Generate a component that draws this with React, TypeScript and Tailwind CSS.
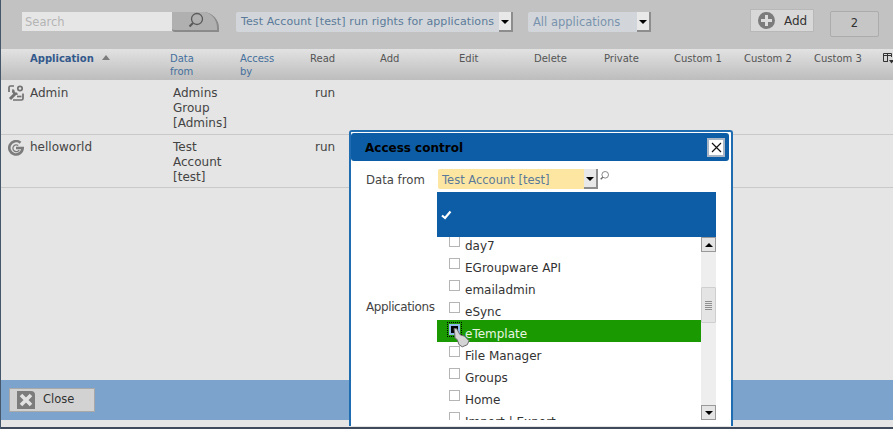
import React from 'react';

const font = { fontFamily: '"DejaVu Sans", sans-serif' };

const columns = ['Read', 'Add', 'Edit', 'Delete', 'Private', 'Custom 1', 'Custom 2', 'Custom 3'];

const apps = ['day7', 'EGroupware API', 'emailadmin', 'eSync', 'eTemplate', 'File Manager', 'Groups', 'Home', 'Import | Export'];

function SelectArrow() {
  return (
    <span className="flex h-[20px] w-[14px] shrink-0 items-center justify-center border-r-2 border-b-2 border-[#8d8d8d] bg-[#e8e8e8]">
      <span className="mt-[2px] h-0 w-0 border-x-[4px] border-t-[4px] border-x-transparent border-t-black" />
    </span>
  );
}

function SearchGlyph({ size = 20, color = '#555' }: { size?: number; color?: string }) {
  return (
    <svg width={size} height={size} viewBox="0 0 20 20" fill="none" stroke={color}>
      <circle cx="12" cy="8" r="5.5" strokeWidth="1.3" />
      <path d="M8 12 L4.5 15.5" strokeWidth="2.2" />
    </svg>
  );
}

function AdminIcon() {
  return (
    <svg width="16" height="16" viewBox="0 0 16 16" fill="none" stroke="#727272">
      <path d="M6 1 H2.5 Q1 1 1 2.5 V7 M5 15 H13.5 Q15 15 15 13.5 V8.5" strokeWidth="1.7" />
      <path d="M2 14 L7.5 8.5" strokeWidth="3" />
      <path d="M5.5 4.5 A3 3 0 0 0 9.5 8.5" strokeWidth="2.4" />
      <circle cx="12" cy="3.5" r="2.2" strokeWidth="1.7" />
      <path d="M9 11.5 H13.5" strokeWidth="1.7" />
    </svg>
  );
}

function GIcon() {
  return (
    <svg width="16" height="16" viewBox="0 0 16 16" fill="none" stroke="#7c7c7c">
      <path d="M12.5 2.8 A6.7 6.7 0 1 0 14.7 8 H8" strokeWidth="2.6" />
      <path d="M10.3 5.5 A3.4 3.4 0 1 0 11.2 10" strokeWidth="1.3" />
    </svg>
  );
}

function ColumnsIcon() {
  return (
    <svg width="11" height="11" viewBox="0 0 11 11" fill="none" stroke="#333">
      <path d="M0.5 8.5 V0.5 H8.5 V4 M0.5 2.5 H8.5 M4.5 0.5 V8.5 M0.5 8.5 H5" />
      <path d="M6 7 H11 L8.5 10.5 Z" fill="#333" stroke="none" />
    </svg>
  );
}

function HandCursor() {
  return (
    <svg width="17" height="20" viewBox="0 0 17 20" className="absolute left-[452px] top-[328px]">
      <path
        d="M1 0.5 L3.7 0.7 L7 6.7 L11.7 8.3 L16 12.7 L14.3 16.7 L9.3 18.8 L6 16.7 L4.3 11.7 L2 10 L1.7 5 Z"
        fill="#d4d4d4"
        stroke="#6a6a6a"
        strokeWidth="1"
      />
    </svg>
  );
}

function AccessControlDialog() {
  return (
    <div className="absolute left-[348px] top-[130px] h-[296px] w-[384px] rounded-t-[3px] border-x-2 border-t-2 border-[#1f6cb0] bg-white">
      <div className="mt-px flex h-[28px] w-[378px] items-center justify-between rounded-[3px] bg-[#0c5da5] pl-[14px] pr-[4px]">
        <span className="pt-[2px] text-[12px] font-bold text-black">Access control</span>
        <span className="flex h-[19px] w-[18px] items-center justify-center border-2 border-[#a9b6c6] bg-white">
          <svg width="11" height="11" viewBox="0 0 11 11" stroke="#111" strokeWidth="1.2">
            <path d="M1 1 L10 10 M10 1 L1 10" />
          </svg>
        </span>
      </div>

      <div className="mt-[8px] flex h-[20px] items-center pl-[15px]">
        <span className="w-[72px] pt-[3px] text-[11.7px] text-[#444]">Data from</span>
        <div className="flex h-[20px] w-[160px] items-center justify-between rounded-[2px] bg-[#fde6a2] pl-[4px]">
          <span className="pt-[3px] text-[11.5px] text-[#5b7a99]">Test Account [test]</span>
          <SelectArrow />
        </div>
        <span className="-mt-[6px]">
          <SearchGlyph size={12} color="#666" />
        </span>
      </div>

      <div className="ml-[86px] mt-[3px] flex h-[45px] w-[279px] items-center bg-[#0c5da5] pl-[4px]">
        <svg width="11" height="10" viewBox="0 0 11 10" fill="none" stroke="#fff" strokeWidth="2.2">
          <path d="M1 5.5 L4 8 L9.5 1.5" />
        </svg>
      </div>

      <div className="flex h-[183px]">
        <span className="mt-[61px] w-[86px] shrink-0 pl-[15px] text-[12px] tracking-[-0.4px] text-[#444]">Applications</span>
        <div className="flex w-[279px] overflow-hidden">
          <ul className="w-[264px] overflow-hidden">
            {apps.map((app, i) => (
              <li
                key={app}
                className={`flex h-[22px] items-center pl-[12px] pt-[6px] text-[12px] ${
                  app === 'eTemplate' ? 'bg-[#1a9a00] text-[#e9f5e3]' : 'text-[#333]'
                } ${i === 0 ? '-mt-[5px]' : ''}`}
              >
                <span
                  className={`-mt-[9px] mr-[5px] h-[11px] w-[11px] shrink-0 ${
                    app === 'eTemplate' ? 'border-2 border-[#8fb8e8] bg-black outline-1 outline-offset-1 outline-dotted outline-black' : 'border border-[#b5b5b5] bg-white'
                  }`}
                />
                {app}
              </li>
            ))}
          </ul>
          <div className="flex w-[15px] flex-col bg-[#eeeeee]">
            <span className="flex h-[15px] items-center justify-center border border-[#999] bg-[#e4e4e4]">
              <span className="h-0 w-0 border-x-[4px] border-b-[4px] border-x-transparent border-b-black" />
            </span>
            <span className="mt-[35px] flex h-[36px] flex-col items-center justify-center gap-px rounded-[1px] border border-[#cfcfcf] bg-[#e4e4e4]">
              <span className="h-px w-[7px] bg-[#8f8f8f]" />
              <span className="h-px w-[7px] bg-[#8f8f8f]" />
              <span className="h-px w-[7px] bg-[#8f8f8f]" />
              <span className="h-px w-[7px] bg-[#8f8f8f]" />
              <span className="h-px w-[7px] bg-[#8f8f8f]" />
            </span>
            <span className="flex-1" />
            <span className="flex h-[15px] items-center justify-center border border-[#999] bg-[#e4e4e4]">
              <span className="h-0 w-0 border-x-[4px] border-t-[4px] border-x-transparent border-t-black" />
            </span>
          </div>
        </div>
      </div>
    </div>
  );
}

export default function App() {
  return (
    <div style={font} className="relative flex h-[429px] w-[893px] flex-col overflow-hidden border-l border-l-[#46566b] bg-[#e5e5e5]">
      {/* Toolbar */}
      <div className="flex h-[49px] shrink-0 items-start bg-[#c2c2c2] pl-[21px] pt-[12px]">
        <div className="flex h-[19px] w-[150px] items-center bg-[#e6e6e6] pl-[3px] pt-[2px] text-[11.5px] text-[#b4b4b4]">Search</div>
        <div className="flex h-[20px] w-[47px] items-center justify-center rounded-tr-[16px] rounded-bl-[3px] border-b-2 border-r-2 border-[#8a8a8a] bg-[#b0b0b0]">
          <SearchGlyph size={20} color="#5a5a5a" />
        </div>
        <div className="ml-[17px] flex h-[20px] w-[277px] items-center justify-between rounded-[2px] bg-[#d2d6da] pl-[5px]">
          <span className="whitespace-nowrap pt-[1px] text-[11px] tracking-[0.1px] text-[#5b7a99]">Test Account [test] run rights for applications</span>
          <SelectArrow />
        </div>
        <div className="ml-[15px] flex h-[20px] w-[123px] items-center justify-between rounded-[2px] bg-[#d2d6da] pl-[5px]">
          <span className="whitespace-nowrap pt-[1px] text-[11.5px] text-[#7a93ad]">All applications</span>
          <SelectArrow />
        </div>
        <div className="-mt-[3px] ml-[99px] flex h-[23px] w-[64px] items-center gap-[9px] border border-[#b8b8b8] bg-[#d8d8d8] pl-[7px] text-[12px] text-[#333]">
          <span className="relative flex h-[17px] w-[17px] items-center justify-center rounded-full bg-[#7c7c7c]">
            <span className="absolute h-[3px] w-[11px] bg-[#dcdcdc]" />
            <span className="absolute h-[11px] w-[3px] bg-[#dcdcdc]" />
          </span>
          Add
        </div>
        <div className="-mt-[1px] ml-[16px] flex h-[26px] w-[49px] items-center justify-center rounded-[2px] border border-[#acacac] bg-[#c6c6c6] text-[11.5px] text-[#333]">2</div>
      </div>

      {/* Table header */}
      <div className="grid h-[31px] shrink-0 grid-cols-[140px_70px_70px_70px_79px_75px_70px_70px_70px_70px_67px_12px] bg-gradient-to-b from-[#e2e2e2] to-[#bdbdbd] pl-[29px] pt-[3px] text-[10px] leading-[13px] text-[#555]">
        <div className="font-bold text-[#33598c]">
          Application <span className="ml-[5px] inline-block h-0 w-0 -translate-y-[2px] border-x-[4px] border-b-[5px] border-x-transparent border-b-[#7d7d7d]" />
        </div>
        <div className="text-[#46709c]">Data<br />from</div>
        <div className="text-[#46709c]">Access<br />by</div>
        {columns.map((c) => (
          <div key={c} className="whitespace-nowrap">{c}</div>
        ))}
        <div className="ml-[2px] mt-[1px]"><ColumnsIcon /></div>
      </div>

      {/* Rows */}
      <div className="grid h-[55px] shrink-0 grid-cols-[22px_143px_142px_1fr] border-b border-[#c9c9c9] pl-[7px] pt-[6px] text-[12px] leading-[15px] text-[#444]">
        <span className="-mt-px"><AdminIcon /></span>
        <span>Admin</span>
        <span>Admins<br />Group<br />[Admins]</span>
        <span>run</span>
      </div>
      <div className="grid h-[53px] shrink-0 grid-cols-[22px_143px_142px_1fr] border-b border-[#c9c9c9] pl-[7px] pt-[5px] text-[12px] leading-[15px] text-[#444]">
        <span><GIcon /></span>
        <span>helloworld</span>
        <span>Test<br />Account<br />[test]</span>
        <span>run</span>
      </div>

      <div className="flex-1" />

      {/* Footer */}
      <div className="flex h-[40px] shrink-0 items-center bg-[#7ca3cb] pl-[8px]">
        <div className="flex h-[24px] w-[86px] items-center gap-[8px] border border-[#a8a8a8] bg-[#d2d2d2] pl-[7px] text-[11.5px] text-[#333]">
          <span className="flex h-[18px] w-[18px] items-center justify-center rounded-tr-[4px] bg-[#7c7c7c]">
            <svg width="14" height="14" viewBox="0 0 14 14" stroke="#e2e2e2" strokeWidth="3.6">
              <path d="M2 2 L12 12 M12 2 L2 12" />
            </svg>
          </span>
          Close
        </div>
      </div>
      <div className="h-[7px] shrink-0" />
      <div className="h-[2px] shrink-0 bg-[#3f4b5c]" />

      <AccessControlDialog />
      <HandCursor />
    </div>
  );
}
